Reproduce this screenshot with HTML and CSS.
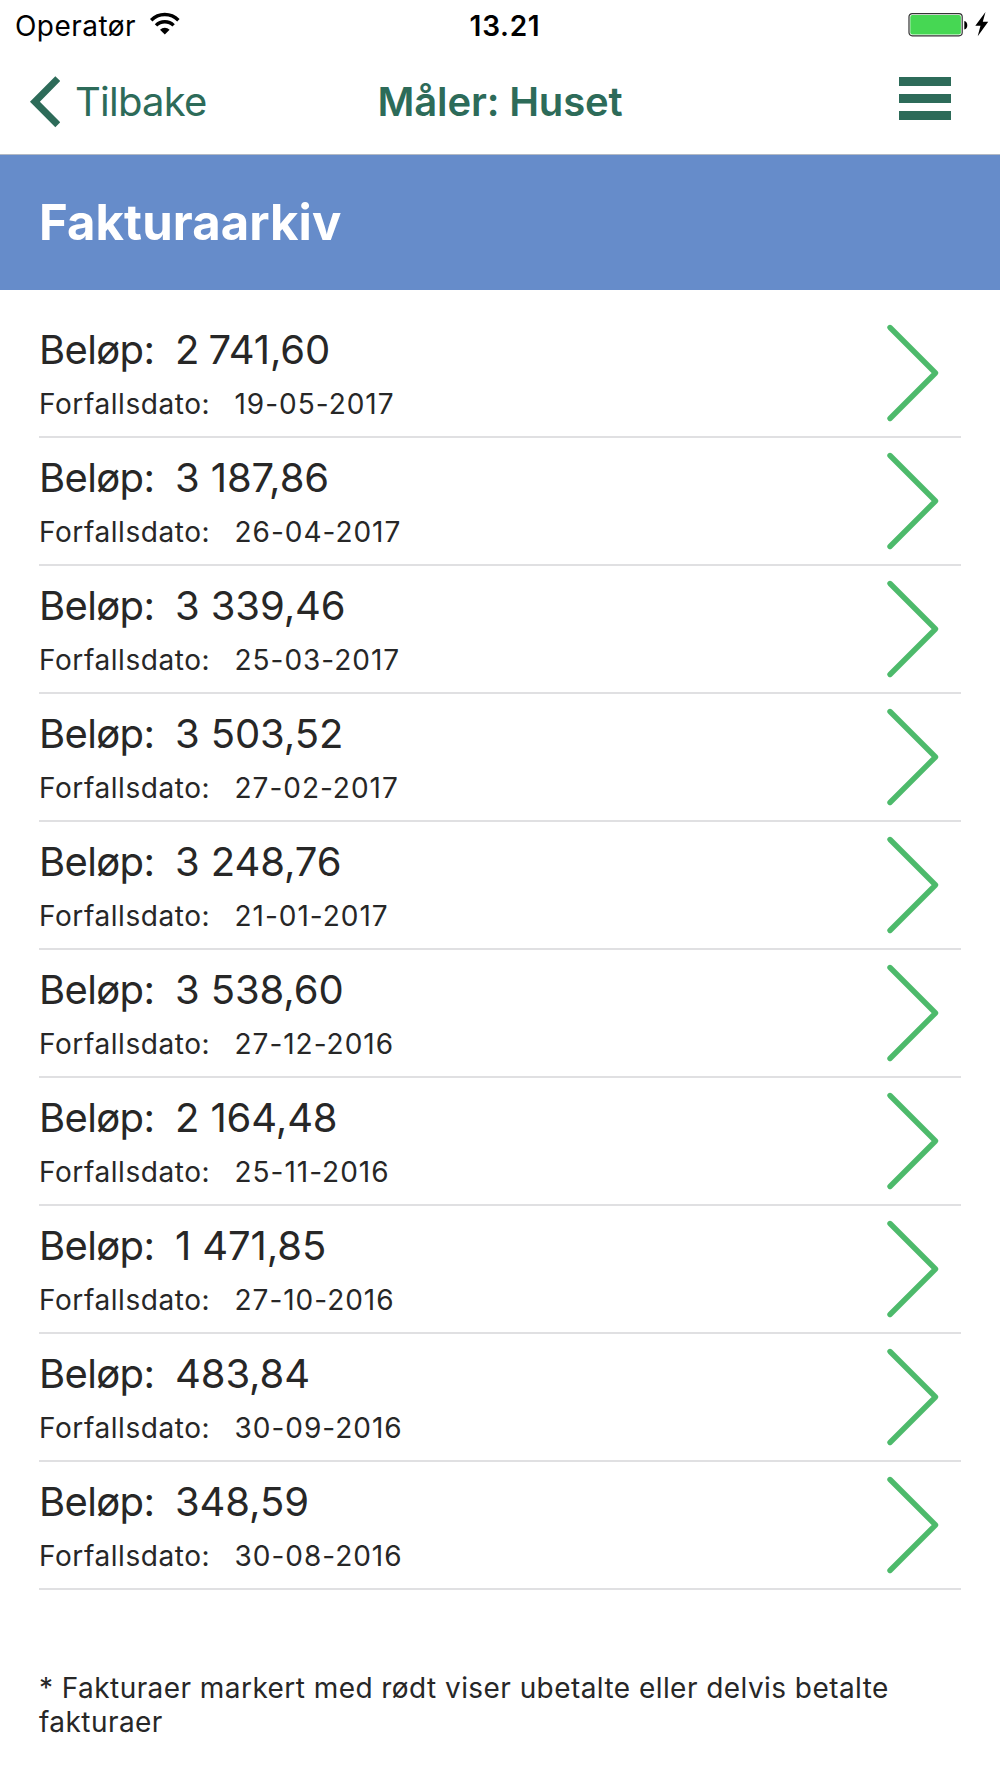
FILE: index.html
```html
<!DOCTYPE html>
<html lang="nb">
<head>
<meta charset="utf-8">
<title>Fakturaarkiv</title>
<link rel="stylesheet" href="styles.css">
</head>
<body>
<svg class="defs" aria-hidden="true"><symbol id="chevron" viewBox="0 0 54 100"><path d="M4 4.500 49.500 50 4 95.500" fill="none" stroke="#4dba6b" stroke-width="5.400" stroke-linecap="round" stroke-linejoin="round"/></symbol></svg>
<div class="status">
  <div class="carrier"><span class="operator">Operatør</span>
    <svg width="32" height="24" viewBox="0 0 32 24"><g fill="none" stroke="#000" stroke-width="3.4"><path d="M2.200 8.200a19.200 19.200 0 0 1 27.200 0"/><path d="M7 13.400a12.400 12.400 0 0 1 17.600 0"/></g><path d="M15.800 22.600 11 17.700a7 7 0 0 1 9.600 0z"/></svg>
  </div>
  <span class="clock">13.21</span>
  <div class="power">
    <svg width="82" height="26" viewBox="0 0 82 26"><rect x="1" y="1.600" width="53.200" height="22.200" rx="3.200" fill="#fff" stroke="#333" stroke-width="1.200"/><rect x="2.300" y="2.900" width="50.600" height="19.600" rx="2" fill="#46d753"/><path d="M56.300 9c4 .6 4 7.800 0 8.400z"/><path d="M77.500 0 67.300 13.700h5.200L69.700 24.200 80.200 9.700h-5.400z"/></svg>
  </div>
</div>
<nav class="nav">
  <a class="back"><svg width="32" height="52" viewBox="0 0 32 52"><path d="M29.800 2.600 6.900 25.700 29.800 48.800" fill="none" stroke="#2d6b59" stroke-width="7"/></svg><span class="back-text">Tilbake</span></a>
  <span class="title">Måler: Huset</span>
  <span class="menu"><i></i><i></i><i></i></span>
</nav>
<header class="banner"><h1>Fakturaarkiv</h1></header>
<main>
  <ul class="list">
    <li><div><p class="amount"><span>Beløp:</span><b>2<s> </s>741,60</b></p><p class="due"><span>Forfallsdato:</span><b>19-05-2017</b></p></div><svg class="chevron"><use href="#chevron"/></svg></li>
    <li><div><p class="amount"><span>Beløp:</span><b>3 187,86</b></p><p class="due"><span>Forfallsdato:</span><b>26-04-2017</b></p></div><svg class="chevron"><use href="#chevron"/></svg></li>
    <li><div><p class="amount"><span>Beløp:</span><b>3 339,46</b></p><p class="due"><span>Forfallsdato:</span><b>25-03-2017</b></p></div><svg class="chevron"><use href="#chevron"/></svg></li>
    <li><div><p class="amount"><span>Beløp:</span><b>3 503,52</b></p><p class="due"><span>Forfallsdato:</span><b>27-02-2017</b></p></div><svg class="chevron"><use href="#chevron"/></svg></li>
    <li><div><p class="amount"><span>Beløp:</span><b>3 248,76</b></p><p class="due"><span>Forfallsdato:</span><b>21-01-2017</b></p></div><svg class="chevron"><use href="#chevron"/></svg></li>
    <li><div><p class="amount"><span>Beløp:</span><b>3 538,60</b></p><p class="due"><span>Forfallsdato:</span><b>27-12-2016</b></p></div><svg class="chevron"><use href="#chevron"/></svg></li>
    <li><div><p class="amount"><span>Beløp:</span><b>2 164,48</b></p><p class="due"><span>Forfallsdato:</span><b>25-11-2016</b></p></div><svg class="chevron"><use href="#chevron"/></svg></li>
    <li><div><p class="amount"><span>Beløp:</span><b>1 471,85</b></p><p class="due"><span>Forfallsdato:</span><b>27-10-2016</b></p></div><svg class="chevron"><use href="#chevron"/></svg></li>
    <li><div><p class="amount"><span>Beløp:</span><b>483,84</b></p><p class="due"><span>Forfallsdato:</span><b>30-09-2016</b></p></div><svg class="chevron"><use href="#chevron"/></svg></li>
    <li><div><p class="amount"><span>Beløp:</span><b>348,59</b></p><p class="due"><span>Forfallsdato:</span><b>30-08-2016</b></p></div><svg class="chevron"><use href="#chevron"/></svg></li>
  </ul>
  <p class="note">* Fakturaer markert med rødt viser ubetalte eller delvis betalte<br>fakturaer</p>
</main>
</body>
</html>
```
FILE: styles.css
```css
* { box-sizing: border-box; }
body { margin: 0; height: 1778px; background: #fff; color: #272727; font-family: Inter, sans-serif; overflow: hidden; }
p, h1, ul { margin: 0; padding: 0; }
b { font-weight: 400; }
s { text-decoration: none; letter-spacing: -2px; }
svg { display: block; flex: none; }
.defs { position: absolute; width: 0; height: 0; }

.status { display: grid; grid-template-columns: 1fr auto 1fr; height: 52px; padding: 0 10px 0 15px; color: #000; font-size: 28px; line-height: 34px; }
.carrier { display: flex; gap: 13px; padding-top: 9px; }
.carrier svg { margin-top: 3px; }
.operator { letter-spacing: .45px; }
.clock { padding: 9px 0 0 5px; font-weight: 600; letter-spacing: .7px; }
.power { display: flex; justify-content: flex-end; padding-top: 12px; }

.nav { display: grid; grid-template-columns: 1fr auto 1fr; height: 103px; padding: 0 49px 0 28px; border-bottom: 1px solid #b2b9c4; color: #2d6b59; font-size: 40px; line-height: 48px; }
.back { display: flex; gap: 15px; padding-top: 24px; }
.back-text { margin-top: 2px; letter-spacing: -.75px; }
.title { padding: 26px 0 0 21px; font-weight: 600; letter-spacing: -.15px; }
.menu { display: flex; flex-direction: column; gap: 8px; justify-self: end; padding-top: 25px; }
.menu i { width: 52px; height: 9px; background: #2d6b59; }

.banner { height: 135px; padding: 38px 39px; background: #668cca; color: #fff; }
.banner h1 { font-size: 49px; line-height: 60px; font-weight: 700; letter-spacing: .1px; }

.list { padding: 20px 39px 0; list-style: none; }
.list li { display: flex; justify-content: space-between; height: 128px; padding: 13px 21px 0 0; border-bottom: 2px solid #e0e0e2; }
.amount, .due { display: flex; white-space: nowrap; }
.amount { margin-top: 3px; font-size: 40px; line-height: 48px; letter-spacing: -.1px; }
.amount span { width: 136px; letter-spacing: -.65px; }
.due { margin-top: 13px; font-size: 28px; line-height: 34px; }
.due span { width: 195.5px; letter-spacing: .57px; }
.due b { letter-spacing: .98px; }
.chevron { width: 54px; height: 100px; }

.note { padding: 81px 39px 0; font-size: 28px; line-height: 34px; letter-spacing: .44px; }
```
